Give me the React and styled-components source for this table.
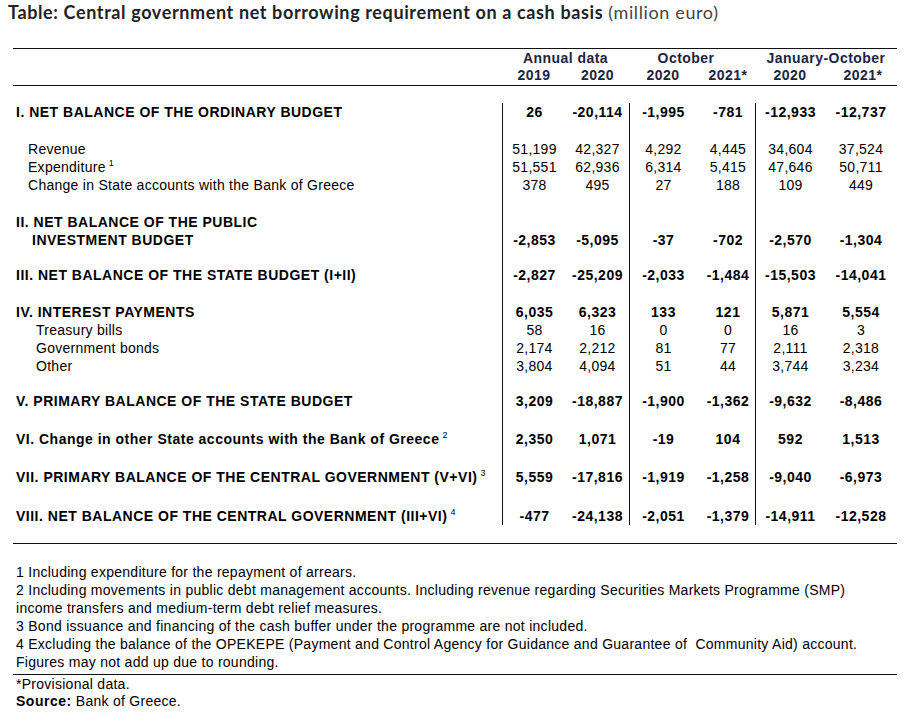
import React from "react";
import styled, { createGlobalStyle } from "styled-components";

const Global = createGlobalStyle`
  html, body { margin: 0; padding: 0; background: #fff; }
  body { font-family: "Liberation Sans", Arial, sans-serif; color: #000; }
`;

const Page = styled.div`
  width: 917px;
  height: 716px;
  padding: 0 0 0 8px;
  box-sizing: border-box;
  overflow: hidden;
`;

const Title = styled.h1`
  margin: 0;
  padding-top: 1px;
  font-family: Lato, "Noto Sans", sans-serif;
  font-size: 18px;
  line-height: 22px;
  font-weight: 700;
  letter-spacing: 0.62px;
  color: #222226;
  white-space: nowrap;
`;

const Unit = styled.span`
  font-weight: 400;
  color: #444;
`;

const Table = styled.div`
  margin: 25px 0 0 5px;
  width: 884px;
  font-size: 14px;
  letter-spacing: 0.27px;
`;

const cols = "489px 64px 63px 68px 58px 70px 72px";

const Header = styled.div`
  border-top: 1px solid #111;
  border-bottom: 1px solid #111;
  display: grid;
  grid-template-columns: ${cols};
  grid-auto-rows: 17px;
  padding: 1px 0 1px;
  color: #1b2440;
  font-weight: 700;
  letter-spacing: 0.45px;
  line-height: 17px;
  text-align: center;
`;

const Group = styled.div`
  grid-column: ${(p) => p.$col} / span 2;
  grid-row: 1;
  padding-right: ${(p) => p.$pull || 0}px;
`;

const Year = styled.div`
  grid-column: ${(p) => p.$col};
  grid-row: 2;
  padding-left: ${(p) => p.$shift || 0}px;
`;

const Body = styled.div`
  margin-top: 17px;
`;

const Row = styled.div`
  --pt: ${(p) => p.$gap}px;
  display: grid;
  grid-template-columns: ${cols};
  line-height: 18px;
  font-weight: ${(p) => (p.$bold ? 700 : 400)};
  letter-spacing: ${(p) => (p.$bold ? "0.5px" : "0.27px")};
`;

const Label = styled.div`
  padding-top: var(--pt);
  padding-left: ${(p) => p.$indent}px;
  white-space: nowrap;
`;

const Num = styled.div`
  padding-top: var(--pt);
  text-align: center;
  white-space: nowrap;
  border-left: ${(p) => (p.$line ? "1px solid #111" : "none")};
  padding-left: ${(p) => p.$shift || 0}px;
`;

const Sup = styled.sup`
  font-size: 9px;
  font-weight: 400;
  vertical-align: 6px;
  line-height: 0;
  margin-left: 3px;
`;

const Notes = styled.div`
  margin-top: 18px;
  border-top: 1px solid #111;
  padding: 19px 0 3px 3px;
  line-height: 18px;
  white-space: nowrap;
`;

const Provisional = styled.div`
  border-top: 1px solid #111;
  padding: 1px 0 0 3px;
  line-height: 17px;
`;

const Strong = styled.b`
  font-weight: 700;
  letter-spacing: 0.5px;
`;

const rows = [
  { label: "I. NET BALANCE OF THE ORDINARY BUDGET", bold: true, gap: 0, indent: 3, v: ["26", "-20,114", "-1,995", "-781", "-12,933", "-12,737"] },
  { label: "Revenue", gap: 19, indent: 15, v: ["51,199", "42,327", "4,292", "4,445", "34,604", "37,524"] },
  { label: "Expenditure", sup: "1", gap: 0, indent: 15, v: ["51,551", "62,936", "6,314", "5,415", "47,646", "50,711"] },
  { label: "Change in State accounts with the Bank of Greece", gap: 0, indent: 15, v: ["378", "495", "27", "188", "109", "449"] },
  { label: "II. NET BALANCE OF THE PUBLIC", bold: true, gap: 19, indent: 3, v: ["", "", "", "", "", ""] },
  { label: "INVESTMENT BUDGET", bold: true, gap: 0, indent: 19, v: ["-2,853", "-5,095", "-37", "-702", "-2,570", "-1,304"] },
  { label: "III. NET BALANCE OF THE STATE BUDGET (I+II)", bold: true, gap: 17, indent: 3, v: ["-2,827", "-25,209", "-2,033", "-1,484", "-15,503", "-14,041"] },
  { label: "IV. INTEREST PAYMENTS", bold: true, gap: 19, indent: 3, v: ["6,035", "6,323", "133", "121", "5,871", "5,554"] },
  { label: "Treasury bills", gap: 0, indent: 23, v: ["58", "16", "0", "0", "16", "3"] },
  { label: "Government bonds", gap: 0, indent: 23, v: ["2,174", "2,212", "81", "77", "2,111", "2,318"] },
  { label: "Other", gap: 0, indent: 23, v: ["3,804", "4,094", "51", "44", "3,744", "3,234"] },
  { label: "V. PRIMARY BALANCE OF THE STATE BUDGET", bold: true, gap: 17, indent: 3, v: ["3,209", "-18,887", "-1,900", "-1,362", "-9,632", "-8,486"] },
  { label: "VI. Change in other State accounts with the Bank of Greece", sup: "2", bold: true, gap: 20, indent: 3, v: ["2,350", "1,071", "-19", "104", "592", "1,513"] },
  { label: "VII. PRIMARY BALANCE OF THE CENTRAL GOVERNMENT (V+VI)", sup: "3", bold: true, gap: 20, indent: 3, v: ["5,559", "-17,816", "-1,919", "-1,258", "-9,040", "-6,973"] },
  { label: "VIII. NET BALANCE OF THE CENTRAL GOVERNMENT (III+VI)", sup: "4", bold: true, gap: 21, indent: 3, v: ["-477", "-24,138", "-2,051", "-1,379", "-14,911", "-12,528"] },
];

const numShift = [0, 0, 0, 4, 0, 0];

export default function App() {
  return (
    <Page>
      <Global />
      <Title>
        Table: Central government net borrowing requirement on a cash basis <Unit>(million euro)</Unit>
      </Title>
      <Table>
        <Header>
          <Group $col={2}>Annual data</Group>
          <Group $col={4} $pull={12}>October</Group>
          <Group $col={6}>January-October</Group>
          <Year $col={2}>2019</Year>
          <Year $col={3}>2020</Year>
          <Year $col={4}>2020</Year>
          <Year $col={5} $shift={4}>2021*</Year>
          <Year $col={6} $shift={-6}>2020</Year>
          <Year $col={7} $shift={4}>2021*</Year>
        </Header>
        <Body>
          {rows.map((r, i) => (
            <Row key={i} $gap={r.gap} $bold={r.bold}>
              <Label $indent={r.indent}>
                {r.label}
                {r.sup && <Sup>{r.sup}</Sup>}
              </Label>
              {r.v.map((n, j) => (
                <Num key={j} $line={j % 2 === 0} $shift={numShift[j]}>
                  {n}
                </Num>
              ))}
            </Row>
          ))}
        </Body>
        <Notes>
          <div>1 Including expenditure for the repayment of arrears.</div>
          <div>2 Including movements in public debt management accounts. Including revenue regarding Securities Markets Programme (SMP)</div>
          <div>income transfers and medium-term debt relief measures.</div>
          <div>3 Bond issuance and financing of the cash buffer under the programme are not included.</div>
          <div>4 Excluding the balance of the OPEKEPE (Payment and Control Agency for Guidance and Guarantee of&nbsp; Community Aid) account.</div>
          <div>Figures may not add up due to rounding.</div>
        </Notes>
        <Provisional>
          <div>*Provisional data.</div>
          <div>
            <Strong>Source:</Strong> Bank of Greece.
          </div>
        </Provisional>
      </Table>
    </Page>
  );
}
